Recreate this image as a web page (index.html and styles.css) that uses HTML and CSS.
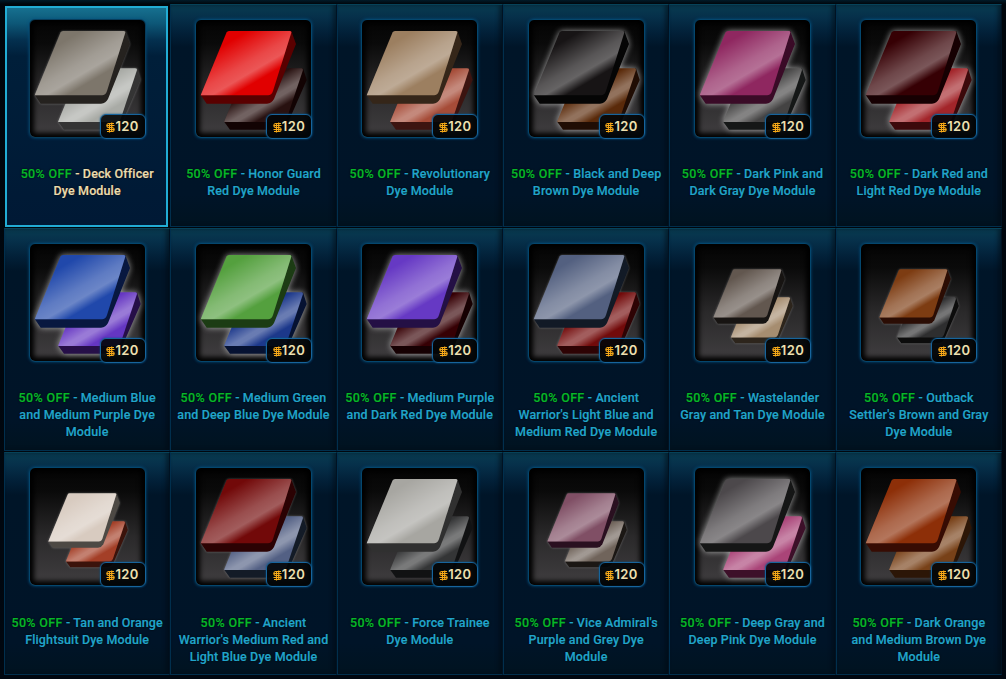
FILE: index.html
```html
<!DOCTYPE html>
<html lang="en">
<head>
    <meta charset="utf-8" />
    <title>Dye Modules</title>
    <link rel="stylesheet" href="styles.css">
</head>
<body>
    <!-- shared gradients and shapes for the dye icons -->
    <svg class="defs" width="0" height="0">
        <defs>
            <linearGradient id="sheen-front" gradientUnits="userSpaceOnUse" x1="33" y1="8" x2="63.3" y2="59.8">
                <stop offset="0.2" stop-color="#fff" stop-opacity="0" />
                <stop offset="0.65" stop-color="#fff" stop-opacity="0.28" />
                <stop offset="0.82" stop-color="#fff" stop-opacity="0.34" />
                <stop offset="1" stop-color="#fff" stop-opacity="0" />
            </linearGradient>
            <linearGradient id="sheen-back" gradientUnits="userSpaceOnUse" x1="56" y1="54" x2="79" y2="93.3">
                <stop offset="0.32" stop-color="#fff" stop-opacity="0" />
                <stop offset="0.66" stop-color="#fff" stop-opacity="0.34" />
                <stop offset="0.74" stop-color="#fff" stop-opacity="0.34" />
                <stop offset="0.95" stop-color="#fff" stop-opacity="0" />
            </linearGradient>
            <path id="front-side" d="M4.7 75 L10.7 83.7 H71 Q76 83 78 79 L100 24 L95.3 11 Z" />
            <path id="front-face" d="M33 11 H93.5 Q95.8 11 95.2 13 L77 71 Q75.5 75.3 72 75.3 H4.7 L30.5 12.5 Q31.2 11 33 11 Z" />
            <path id="back-side" d="M28 101.5 L34 109.7 H84 Q89 109 91 105 L110.7 60 L107 48.3 Z" />
            <path id="back-face" d="M50 48.3 H105 Q107.5 48.3 106.8 50.5 L91 98 Q89.500 102 86 102 H28 Z" />
        </defs>
    </svg>

    <div id="grid" class="grid"></div>

    <script src="script.js"></script>
</body>
</html>
```

FILE: styles.css
```css
body {
    margin: 0;
    background: #000710;
    font-family: Roboto, 'Liberation Sans', sans-serif;
}

.defs {
    position: absolute;
}

.grid {
    box-sizing: border-box;
    width: 1006px;
    height: 679px;
    padding: 4px 4px 0;
    display: grid;
    grid-template-columns: repeat(6, 1fr);
    grid-template-rows: 224px 224px 224px;
    background: linear-gradient(#001a28, #00060c 4px, #000710);
}

.card {
    box-sizing: border-box;
    display: flex;
    flex-direction: column;
    align-items: center;
    margin-bottom: 1px;
    padding-top: 15px;
    border: 1px solid #012f4d;
    border-top-color: #064259;
    border-right-color: #001222;
    background: linear-gradient(#083b50, #06304a 12px, #022038 28px, #001528 42px, #001428 190px, #001320);
    box-shadow: inset -3px 0 4px rgba(0, 8, 16, 0.5);
}

.card.selected {
    margin: 2px 2px 1px 1px;
    padding: 12px 0 0 1px;
    border: 2px solid #22acd4;
    background: linear-gradient(#16708f, #0d5878 15px, #04304f 32px, #001f3a 48px, #001935);
    box-shadow: none;
}

.frame {
    position: relative;
    box-sizing: border-box;
    width: 117px;
    height: 119px;
    margin-top: -1px;
    border: 1px solid #04466d;
    border-radius: 6px;
    background: linear-gradient(#040404, #0a0a0a 20%, #2a292a 58%, #403e40);
    box-shadow: 0 0 3px #035080, inset 0 0 5px 4px #000;
}

.selected .frame {
    border-color: #073c5b;
}

.dye {
    display: block;
    width: 115px;
    height: 117px;
}

.glow .pieces {
    filter: drop-shadow(0 0 3px rgba(255, 255, 255, 0.6));
}

.soft .pieces {
    filter: drop-shadow(0 0 1px rgba(255, 255, 255, 0.3));
}

.price {
    position: absolute;
    right: -1px;
    bottom: -2px;
    box-sizing: border-box;
    width: 46px;
    height: 25px;
    display: flex;
    align-items: center;
    justify-content: center;
    border: 1px solid #17649c;
    border-radius: 6px;
    background: rgba(2, 5, 8, 0.9);
    box-shadow: 0 0 2px #05548a;
    color: #eee0b0;
    font-family: Inter, Roboto, sans-serif;
    font-size: 13px;
    font-weight: 600;
    line-height: 23px;
    letter-spacing: 0.4px;
}

.coin {
    width: 9px;
    height: 11px;
    margin-top: 1px;
}

.name {
    margin: 27px 0 0;
    color: #20a5cb;
    font-size: 12.5px;
    font-weight: 500;
    line-height: 17px;
    letter-spacing: 0.13px;
    text-align: center;
    white-space: nowrap;
    text-shadow: 0 0 2px #000;
    -webkit-text-stroke: 0.2px;
}

.card:nth-child(n+13) .name {
    margin-top: 28px;
}

.selected .name {
    color: #eadcae;
}

.name .sale {
    color: #06b829;
    letter-spacing: 0.35px;
}
```

FILE: script.js
```js
// front / back: [face colour, side colour]
const dyes = [
    { name: 'Deck Officer|Dye Module', front: ['#7d766b', '#25221f'], back: ['#a9aba6', '#343434'], style: 'soft', selected: true },
    { name: 'Honor Guard|Red Dye Module', front: ['#e10000', '#5a0000'], back: ['#281110', '#120303'] },
    { name: 'Revolutionary|Dye Module', front: ['#9c7f60', '#352619'], back: ['#a64c38', '#3c1410'] },
    { name: 'Black and Deep|Brown Dye Module', front: ['#171415', '#050505'], back: ['#5a2a0a', '#200d04'], style: 'glow' },
    { name: 'Dark Pink and|Dark Gray Dye Module', front: ['#8f2760', '#3a0b27'], back: ['#444343', '#151717'], style: 'glow' },
    { name: 'Dark Red and|Light Red Dye Module', front: ['#360004', '#160002'], back: ['#a3252a', '#3c090b'], style: 'glow' },
    { name: 'Medium Blue|and Medium Purple Dye|Module', front: ['#2048ab', '#081840'], back: ['#6536c2', '#260f48'], style: 'glow' },
    { name: 'Medium Green|and Deep Blue Dye Module', front: ['#54a03e', '#1c3c14'], back: ['#1c388b', '#061232'], style: 'glow' },
    { name: 'Medium Purple|and Dark Red Dye Module', front: ['#6639c4', '#241045'], back: ['#360004', '#160002'], style: 'glow' },
    { name: "Ancient|Warrior's Light Blue and|Medium Red Dye Module", front: ['#536080', '#121a26'], back: ['#720a0a', '#2e0304'], style: 'soft' },
    { name: 'Wastelander|Gray and Tan Dye Module', front: ['#62574f', '#171412'], back: ['#a68d70', '#2d251c'], style: 'soft', small: true },
    { name: "Outback|Settler's Brown and Gray|Dye Module", front: ['#7d3c12', '#2b0d04'], back: ['#2e2e2f', '#0c0c0c'], style: 'soft', small: true },
    { name: 'Tan and Orange|Flightsuit Dye Module', front: ['#d8cbc0', '#4d4944'], back: ['#a43f27', '#3b130b'], style: 'soft', small: true },
    { name: "Ancient|Warrior's Medium Red and|Light Blue Dye Module", front: ['#720909', '#2b0203'], back: ['#536084', '#131b27'], style: 'soft' },
    { name: 'Force Trainee|Dye Module', front: ['#a7a6a1', '#303030'], back: ['#343536', '#111213'] },
    { name: "Vice Admiral's|Purple and Grey Dye|Module", front: ['#804f65', '#2a1020'], back: ['#70645b', '#1b1714'], style: 'soft', small: true },
    { name: 'Deep Gray and|Deep Pink Dye Module', front: ['#4c484b', '#151616'], back: ['#aa4478', '#3d1029'], style: 'glow' },
    { name: 'Dark Orange|and Medium Brown Dye|Module', front: ['#8d2f08', '#370c03'], back: ['#784118', '#2c1607'] }
];

function dyeIcon(dye) {
    const scale = dye.small ? 'translate(14.8 17) scale(0.75)' : '';
    return `
        <svg class="dye" viewBox="0 0 115 117">
            <g class="pieces"><g transform="${scale}">
                <use href="#back-side" fill="${dye.back[1]}" />
                <use href="#back-face" fill="${dye.back[0]}" />
                <use href="#back-face" fill="url(#sheen-back)" />
                <use href="#front-side" fill="${dye.front[1]}" />
                <use href="#front-face" fill="${dye.front[0]}" />
                <use href="#front-face" fill="url(#sheen-front)" />
            </g></g>
        </svg>`;
}

const coin = `
    <svg class="coin" viewBox="0 0 9 11" fill="none" stroke="#f5a818" stroke-width="1.2">
        <path d="M8 1.500H2.500Q1 1.500 .8 3.500M.5 3.500H8.500M.8 3.500Q1 5.500 2.500 5.500H6.500Q8 5.500 8.200 7.500M.5 7.500H8.500M8.200 7.500Q8 9.500 6.500 9.500H1M3.500 1V10.500M5.700 .5V10" />
    </svg>`;

document.getElementById('grid').innerHTML = dyes.map(dye => `
    <div class="card${dye.selected ? ' selected' : ''}">
        <div class="frame ${dye.style || ''}">
            ${dyeIcon(dye)}
            <div class="price">${coin}<span>120</span></div>
        </div>
        <p class="name"><span class="sale">50% OFF</span> - ${dye.name.split('|').join('<br>')}</p>
    </div>`).join('');
```
